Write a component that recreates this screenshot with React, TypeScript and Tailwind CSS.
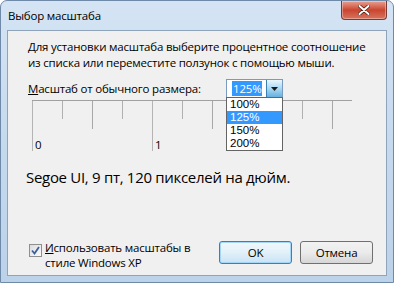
import React from 'react';

const ticks = [0, 1, 2, 3, 4, 5, 6, 7, 8, 9, 10];

function tickClass(i: number) {
  if (i % 4 === 0) return 'h-[50px] bg-[#b4b4b4]';
  if (i % 4 === 2) return 'h-[28px] bg-[#a8a8a8]';
  return 'h-[18px] bg-[#b0b0b0]';
}

export default function App() {
  return (
    <div className="w-[394px] h-[283px] overflow-hidden rounded-t-[7px] border border-[#6f8aa8] bg-gradient-to-b from-[#d4e4f4] via-[#c6daee] to-[#bcd2e9] font-['Open_Sans','Noto_Sans',sans-serif] text-[11.5px] tracking-[-0.2px] text-black">
      {/* title bar */}
      <div className="flex h-[29px] items-start justify-between">
        <span className="ml-[7px] mt-[7px] leading-[16px] text-black">Выбор масштаба</span>
        <button className="mr-[6px] flex h-[19px] w-[46px] items-center justify-center rounded-b-[4px] border border-t-0 border-[#7a3a33] bg-gradient-to-b from-[#e8a093] via-[#c9452f] to-[#d8735d] shadow-[inset_0_0_0_1px_rgba(255,255,255,0.35)]">
          <svg width="12" height="10" viewBox="0 0 12 10">
            <path d="M1.5 1 L10.5 9 M10.5 1 L1.5 9" stroke="#4a1a12" strokeWidth="3.4" strokeLinecap="round" />
            <path d="M1.5 1 L10.5 9 M10.5 1 L1.5 9" stroke="#ffffff" strokeWidth="2" strokeLinecap="round" />
          </svg>
        </button>
      </div>

      {/* client area */}
      <div className="relative ml-[6px] h-[246px] w-[380px] border border-[#8fa4bb] bg-[#f0f0f0]">
        <p className="ml-[20px] mt-[8px] whitespace-nowrap leading-[16px]">
          Для установки масштаба выберите процентное соотношение
          <br />
          из списка или переместите ползунок с помощью мыши.
        </p>

        <div className="mt-[8px] flex items-center">
          <span className="ml-[20px] w-[198px] whitespace-nowrap leading-[16px]">
            <span className="underline">М</span>асштаб от обычного размера:
          </span>
          <div className="flex h-[19px] w-[57px] items-stretch border border-[#7a9bc0] bg-white">
            <div className="flex flex-1 items-center pl-[5px]">
              <span className="bg-[#3399ff] px-[1px] leading-[15px] text-white">125%</span>
            </div>
            <div className="flex w-[16px] items-center justify-center border-l border-[#3c7fb1] bg-gradient-to-b from-[#eaf6fd] via-[#a7d9f5] to-[#67b0dc]">
              <svg width="7" height="4" viewBox="0 0 7 4">
                <path d="M0 0 H7 L3.5 4 Z" fill="#1a1a1a" />
              </svg>
            </div>
          </div>
        </div>

        {/* dropdown list */}
        <div className="absolute left-[218px] top-[66px] w-[57px] border border-[#646464] bg-white font-['Liberation_Sans','Arial',sans-serif] text-[11.5px] leading-[13px] tracking-normal">
          <div className="px-[3px]">100%</div>
          <div className="bg-[#3399ff] px-[3px] text-white">125%</div>
          <div className="px-[3px]">150%</div>
          <div className="px-[3px]">200%</div>
        </div>

        {/* ruler */}
        <div className="ml-[24px] mt-[2px] w-[320px]">
          <div className="h-[1px] w-[320px] bg-[#a0a0a0]" />
          <div className="flex h-[50px]">
            {ticks.map((i) => (
              <div key={i} className="flex w-[30px] shrink-0 items-start">
                <div className={`w-[1px] ${tickClass(i)}`} />
                {i % 4 === 0 && (
                  <span className="ml-[2px] mt-[37px] leading-[14px]">{i / 4}</span>
                )}
              </div>
            ))}
          </div>
        </div>

        <p className="ml-[18px] mt-[15px] whitespace-nowrap text-[15px] leading-[22px] tracking-[-0.3px]">
          Segoe UI, 9 пт, 120 пикселей на дюйм.
        </p>

        <div className="mt-[52px] flex items-start">
          <div className="ml-[21px] mt-[4px] flex h-[13px] w-[13px] shrink-0 items-center justify-center border border-[#8e8f8f] bg-gradient-to-br from-[#dcdcdc] to-[#fbfbfb]">
            <svg width="9" height="9" viewBox="0 0 9 9">
              <path d="M1 4.5 L3.5 7.5 L8 1" stroke="#3c5f9c" strokeWidth="1.8" fill="none" />
            </svg>
          </div>
          <span className="ml-[3px] w-[150px] whitespace-nowrap leading-[15px]">
            <span className="underline">И</span>спользовать масштабы в
            <br />
            стиле Windows XP
          </span>
          <button className="ml-[24px] mt-[1px] h-[23px] w-[73px] shrink-0 rounded-[3px] border border-[#3c7fb1] bg-gradient-to-b from-[#f2f8fc] via-[#e2f0f9] to-[#c8e3f4] shadow-[inset_0_0_0_1px_#a4d7f7]">
            OK
          </button>
          <button className="ml-[8px] mt-[1px] h-[23px] w-[73px] shrink-0 rounded-[3px] border border-[#707070] bg-gradient-to-b from-[#f2f2f2] via-[#ebebeb] to-[#d6d6d6]">
            Отмена
          </button>
        </div>
      </div>
    </div>
  );
}
